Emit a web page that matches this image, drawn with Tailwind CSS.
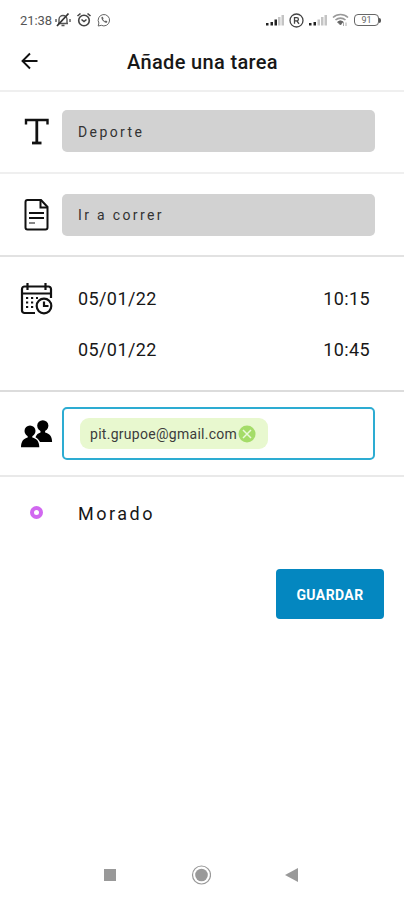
<!DOCTYPE html>
<html lang="es">
<head>
    <meta charset="UTF-8">
    <meta name="viewport" content="width=device-width, initial-scale=1.0">
    <title>Añade una tarea</title>
    <script src="https://cdn.jsdelivr.net/npm/@tailwindcss/browser@4"></script>
</head>
<body class="bg-white font-['Roboto',sans-serif] text-[#171717]">
    <div class="w-[404px] h-[900px] flex flex-col overflow-hidden">
        <!-- Status bar -->
        <div class="h-10 shrink-0 flex items-center justify-between pl-5 pr-[23px] text-[#555]">
            <div class="flex items-center">
                <span class="w-8 text-[13px] leading-none tracking-[-0.1px] whitespace-nowrap">21:38</span>
                <svg class="ml-[2px] w-[18px] h-4" viewBox="0 0 18 16" fill="none" stroke="#555" stroke-width="1.4">
                    <path d="M4 11.5h10M5 11V7.5a4 4 0 0 1 8 0V11M7.5 13.5h3M2 7v3M16 7v3"/>
                    <path d="M14.500 1.500L3 14" stroke="#333" stroke-width="1.8"/>
                </svg>
                <svg class="ml-[4px] w-4 h-4" viewBox="0 0 16 16" fill="none" stroke="#444" stroke-width="1.6">
                    <circle cx="8" cy="8.500" r="5.300"/>
                    <path d="M1.500 4l3-2.500M14.500 4l-3-2.500M5.500 7.500L8 9.500l2.500-2"/>
                </svg>
                <svg class="ml-[5px] w-[14px] h-[14px]" viewBox="0 0 14 14" fill="none" stroke="#666">
                    <path d="M1.200 13l.7-3A5.700 5.700 0 1 1 4.300 12.300z"/>
                    <path d="M4.500 4c-.6 2.500 2.500 6 5.500 5.800l.3-1.500-1.500-.7-1 .7L6 6.500l.5-1-.7-1.700z" fill="#666" stroke="none"/>
                </svg>
            </div>
            <div class="flex items-center">
                <svg class="w-[19px] h-3" viewBox="0 0 19 12">
                    <path fill="#222" d="M0 9h2.500v2.500H0zM4.500 8H7v3.500H4.500zM8.500 5.500H11v6H8.500z"/>
                    <path fill="#c4c4c4" d="M12 3h2.500v8.500H12zM15.500 1H18v10.500h-2.500z"/>
                </svg>
                <svg class="ml-[4px] w-[15px] h-[15px]" viewBox="0 0 15 15" fill="none" stroke="#444" stroke-width="1.3">
                    <circle cx="7.500" cy="7.500" r="6.500"/>
                    <path d="M5.500 10.800V4.700h2.300a1.600 1.600 0 0 1 0 3.200H5.500M8 8l2 2.800"/>
                </svg>
                <svg class="ml-[5px] w-[19px] h-3" viewBox="0 0 19 12">
                    <path fill="#222" d="M0 9h2.500v2.500H0zM4.500 8H7v3.500H4.500z"/>
                    <path fill="#c4c4c4" d="M8.500 5.500H11v6H8.500zM12 3h2.500v8.500H12zM15.500 1H18v10.500h-2.500z"/>
                </svg>
                <svg class="ml-1 w-[17px] h-[14px]" viewBox="0 0 17 14" fill="none" stroke="#999" stroke-width="1.600">
                    <path d="M1 4.500a11 11 0 0 1 15 0M3.500 7a7.500 7.500 0 0 1 10 0"/>
                    <path d="M5.500 9a4.500 4.500 0 0 1 5.500-.3L8.500 12z" fill="#666" stroke="#666" stroke-width=".8"/>
                    <path d="M11.500 9v4M14 13V9.500" stroke="#aaa" stroke-width="1"/>
                </svg>
                <div class="ml-[5px] flex items-center">
                    <div class="w-[25px] h-[12px] border-[1.5px] border-[#666] rounded-[4px] text-[9px] leading-[10px] text-center text-[#666]">91</div>
                    <div class="w-[2px] h-[5px] bg-[#555] rounded-r-sm"></div>
                </div>
            </div>
        </div>

        <!-- Header -->
        <div class="h-[52px] shrink-0 grid grid-cols-[40px_1fr_40px] items-center pb-2 px-5 border-b-2 border-[#efefef]">
            <svg class="w-[19px] h-[18px]" viewBox="0 0 19 18" fill="none" stroke="#111" stroke-width="1.900">
                <path d="M17.500 9H2.500M10 1.500L2.500 9l7.500 7.500"/>
            </svg>
            <h1 class="pl-px pt-px text-center text-[20px] leading-6 font-medium tracking-[0.35px] whitespace-nowrap">Añade una tarea</h1>
        </div>

        <!-- Title -->
        <div class="h-[82px] shrink-0 flex items-center border-b-2 border-[#efefef] pl-5 pb-[2px]">
            <svg class="w-[33px] h-[30px] mr-[9px]" viewBox="0 0 33 30" fill="none" stroke="#111">
                <path stroke-width="2.400" d="M6 8.500V4h21.500v4.500"/>
                <path stroke-width="2.800" d="M16.800 4v23"/>
                <path stroke-width="2.800" d="M12 27h9.500"/>
            </svg>
            <div class="w-[313px] h-[42px] rounded-[5px] bg-[#d2d2d2] flex items-center px-4 pt-[2px] text-[14px] tracking-[2.4px] text-[#333]">Deporte</div>
        </div>

        <!-- Description -->
        <div class="h-[83px] shrink-0 flex items-center border-b-2 border-[#e2e2e2] pl-5">
            <svg class="w-[33px] h-8 mr-[9px]" viewBox="0 0 33 32" fill="none" stroke="#111" stroke-width="2">
                <path d="M7.500 1H21l6.500 7v20.500a2 2 0 0 1-2 2h-18a2 2 0 0 1-2-2V3a2 2 0 0 1 2-2z"/>
                <path d="M20.500 1v7.500h7"/>
                <path d="M9 14h15M9 19h15" stroke-width="1.900"/>
                <path d="M9 24h6" stroke="#888"/>
            </svg>
            <div class="w-[313px] h-[42px] rounded-[5px] bg-[#d2d2d2] flex items-center px-4 pt-[2px] text-[14px] tracking-[2.35px] text-[#333]">Ir a correr</div>
        </div>

        <!-- Dates -->
        <div class="h-[135px] shrink-0 flex items-start border-b-2 border-[#dcdcdc] pl-5 pt-[25px]">
            <svg class="w-[33px] h-[33px] mr-[25px]" viewBox="0 0 33 33" fill="none" stroke="#111" stroke-width="2.200">
                <path d="M15 31H4.500A2.500 2.500 0 0 1 2 28.500V7a2.500 2.500 0 0 1 2.500-2.500h24A2.500 2.500 0 0 1 31 7v9M2 11.500h29"/>
                <path d="M7.500 1v7M25.500 1v7"/>
                <path stroke-dasharray="2.200 2.800" d="M6 16h12M6 20.500h9M6 25h8"/>
                <circle cx="24" cy="24" r="7.300"/>
                <path d="M24 19.500V24h4.500"/>
            </svg>
            <div class="w-[292px] flex flex-col gap-[27px] mt-[5px] text-[18px] leading-6">
                <div class="flex justify-between">
                    <span class="tracking-[0.4px]">05/01/22</span>
                    <span class="tracking-[0.4px]">10:15</span>
                </div>
                <div class="flex justify-between">
                    <span class="tracking-[0.4px]">05/01/22</span>
                    <span class="tracking-[0.4px]">10:45</span>
                </div>
            </div>
        </div>

        <!-- Guests -->
        <div class="h-[85px] shrink-0 flex items-center border-b-2 border-[#e9e9e9] pl-5">
            <svg class="w-[33px] h-[30px] mr-[9px]" viewBox="0 0 33 30" fill="#000">
                <circle cx="22.800" cy="6.800" r="5.600"/>
                <path d="M20.500 11h4.600v2.500c4.500 1 7 4 7 9.500H20c-.8-2-2.300-3.500-4.500-4.800 1-2.700 2.700-4 5-4.700z"/>
                <circle cx="10" cy="12" r="5.500"/>
                <path d="M7.700 16h4.600v2.500c4.500 1 7 4 7 9.800H1c0-5.800 2.500-8.800 6.700-9.800z"/>
            </svg>
            <div class="w-[313px] h-[53px] rounded-[5px] border-2 border-[#2dacd2] flex items-center pl-4">
                <div class="w-[188px] h-[31px] rounded-[9px] bg-[#e8f8cf] flex items-center pl-[10px] text-[14px] text-[#3c3c3c]">
                    <span class="w-[148px] pt-px whitespace-nowrap tracking-[0.28px]">pit.grupoe@gmail.com</span>
                    <svg class="w-[18px] h-[18px]" viewBox="0 0 18 18">
                        <circle cx="9" cy="9" r="8.500" fill="#a4dc68"/>
                        <path d="M5 5l8 8M13 5l-8 8" stroke="#eafadb" stroke-width="1.500"/>
                    </svg>
                </div>
            </div>
        </div>

        <!-- Color -->
        <div class="h-[71px] shrink-0 flex items-center pl-[30px]">
            <div class="w-[13px] h-[13px] mr-[35px] rounded-full border-4 border-[#d168f0]"></div>
            <span class="pt-px text-[18px] tracking-[2.5px]">Morado</span>
        </div>

        <div class="flex justify-end pr-5 pt-[21px]">
            <button class="w-[108px] h-[50px] pt-[2px] rounded-[4px] bg-[#0487c0] text-white text-[14px] font-bold tracking-[0.4px]">GUARDAR</button>
        </div>

        <!-- Android navigation -->
        <div class="mt-auto h-[50px] shrink-0 flex items-center justify-between pl-[104px] pr-[106px]">
            <div class="w-3 h-3 bg-[#999]"></div>
            <svg class="w-5 h-5" viewBox="0 0 20 20">
                <circle cx="10.500" cy="10" r="9" fill="none" stroke="#999" stroke-width="1.200"/>
                <circle cx="10.500" cy="10" r="6.300" fill="#999"/>
            </svg>
            <svg class="w-[13px] h-[14px]" viewBox="0 0 13 14" fill="#999">
                <path d="M13 0v14L0 7z"/>
            </svg>
        </div>
    </div>
</body>
</html>
